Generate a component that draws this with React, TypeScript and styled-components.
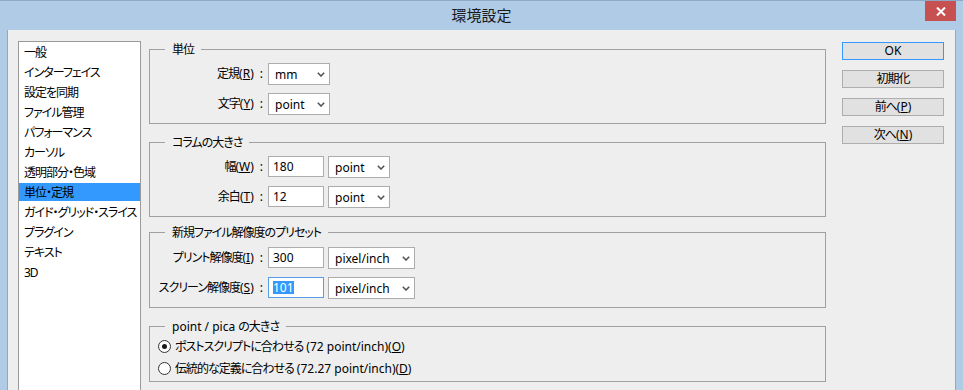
import React from 'react';
import styled, { createGlobalStyle } from 'styled-components';

const GlobalStyle = createGlobalStyle`
  html, body {
    margin: 0;
    padding: 0;
    background: #afcbe6;
  }
  body {
    font-family: 'Noto Sans', 'Noto Sans CJK JP', sans-serif;
    font-size: 12px;
    color: #000;
    font-feature-settings: 'palt';
  }
  * {
    box-sizing: border-box;
  }
`;

const NAV_ITEMS = [
  '一般',
  'インターフェイス',
  '設定を同期',
  'ファイル管理',
  'パフォーマンス',
  'カーソル',
  '透明部分・色域',
  '単位・定規',
  'ガイド・グリッド・スライス',
  'プラグイン',
  'テキスト',
  '3D',
];

const Chevron = () => (
  <svg width="8" height="5" viewBox="0 0 8 5">
    <path d="M0.8 0.8 L4 4 L7.2 0.8" fill="none" stroke="#555" strokeWidth="1.6" />
  </svg>
);

const SelectElem: React.FC<{ value: string; width: number }> = ({ value, width }) => (
  <Select $width={width}>
    <span>{value}</span>
    <Chevron />
  </Select>
);

const LabelElem: React.FC<{ text: string; mnemonic: string }> = ({ text, mnemonic }) => (
  <Label>
    <Jp>{text}</Jp>(<u>{mnemonic}</u>)<Colon>:</Colon>
  </Label>
);

export default function App() {
  return (
    <>
      <GlobalStyle />
      <Window>
        <TitleBar>
          <Title>環境設定</Title>
          <CloseButton>
            <svg width="10" height="9" viewBox="0 0 10 9">
              <path d="M1 0.5 L9 8.5 M9 0.5 L1 8.5" stroke="#fff" strokeWidth="2" />
            </svg>
          </CloseButton>
        </TitleBar>

        <Client>
          <NavList>
            {NAV_ITEMS.map((item) => (
              <NavItem key={item} $active={item === '単位・定規'}>
                {item}
              </NavItem>
            ))}
          </NavList>

          <Groups>
            <Group $top={0} $pad="5px 0 8px">
              <Legend>
                <Jp>単位</Jp>
              </Legend>
              <Rows>
                <Row>
                  <LabelElem text="定規" mnemonic="R" />
                  <SelectElem value="mm" width={62} />
                </Row>
                <Row>
                  <LabelElem text="文字" mnemonic="Y" />
                  <SelectElem value="point" width={62} />
                </Row>
              </Rows>
            </Group>

            <Group $top={10} $pad="5px 0 8px">
              <Legend>
                <Jp>コラムの大きさ</Jp>
              </Legend>
              <Rows>
                <Row>
                  <LabelElem text="幅" mnemonic="W" />
                  <Input>180</Input>
                  <SelectElem value="point" width={62} />
                </Row>
                <Row>
                  <LabelElem text="余白" mnemonic="T" />
                  <Input>12</Input>
                  <SelectElem value="point" width={62} />
                </Row>
              </Rows>
            </Group>

            <Group $top={7} $pad="6px 0 8px">
              <Legend>
                <Jp>新規ファイル解像度のプリセット</Jp>
              </Legend>
              <Rows>
                <Row>
                  <LabelElem text="プリント解像度" mnemonic="I" />
                  <Input>300</Input>
                  <SelectElem value="pixel/inch" width={87} />
                </Row>
                <Row>
                  <LabelElem text="スクリーン解像度" mnemonic="S" />
                  <Input $focused>
                    <Selection>101</Selection>
                  </Input>
                  <SelectElem value="pixel/inch" width={87} />
                </Row>
              </Rows>
            </Group>

            <Group $top={10} $pad="0 0 2px">
              <Legend>
                point / pica <Jp>の大きさ</Jp>
              </Legend>
              <RadioRow>
                <Radio $checked />
                <Jp>ポストスクリプトに合わせる</Jp>&nbsp;(72 point/inch)(<u>O</u>)
              </RadioRow>
              <RadioRow>
                <Radio />
                <Jp>伝統的な定義に合わせる</Jp>&nbsp;(72.27 point/inch)(<u>D</u>)
              </RadioRow>
            </Group>
          </Groups>

          <Buttons>
            <Button $primary>OK</Button>
            <Button>
              <Jp>初期化</Jp>
            </Button>
            <Button>
              <Jp>前へ</Jp>(<u>P</u>)
            </Button>
            <Button>
              <Jp>次へ</Jp>(<u>N</u>)
            </Button>
          </Buttons>
        </Client>
      </Window>
    </>
  );
}

const Window = styled.div`
  width: 963px;
  height: 390px;
  overflow: hidden;
  display: flex;
  flex-direction: column;
  background: #afcbe6;
  border-top: 1px solid #8ea8c8;
`;

const TitleBar = styled.div`
  height: 29px;
  flex: none;
  display: grid;
  grid-template-columns: 1fr auto 1fr;
  align-items: start;
  padding: 0 7px;
`;

const Title = styled.div`
  grid-column: 2;
  font-size: 15px;
  line-height: 29px;
  color: #1a1a1a;
`;

const CloseButton = styled.div`
  grid-column: 3;
  justify-self: end;
  width: 31px;
  height: 20px;
  background: #c75050;
  display: flex;
  align-items: center;
  justify-content: center;
`;

const Client = styled.div`
  flex: 1;
  margin: 0 7px;
  border-left: 1px solid #90a8c6;
  border-right: 1px solid #90a8c6;
  background: #eeeeee;
  display: flex;
  align-items: flex-start;
  padding: 11px 11px 0 10px;
`;

const Jp = styled.span`
  letter-spacing: -1px;
`;

const NavList = styled.div`
  width: 123px;
  height: 360px;
  flex: none;
  background: #fff;
  border: 1px solid #9a9a9a;
  padding-top: 1px;
  display: flex;
  flex-direction: column;
  gap: 2px;
`;

const NavItem = styled.div<{ $active?: boolean }>`
  height: 18px;
  line-height: 19px;
  padding-left: 5px;
  white-space: nowrap;
  overflow: hidden;
  letter-spacing: -1px;
  background: ${({ $active }) => ($active ? '#3399ff' : 'transparent')};
`;

const Groups = styled.div`
  width: 677px;
  flex: none;
  margin-left: 8px;
  display: flex;
  flex-direction: column;
`;

const Group = styled.fieldset<{ $top: number; $pad: string }>`
  margin: ${({ $top }) => $top}px 0 0;
  padding: ${({ $pad }) => $pad};
  min-width: 0;
  border: 1px solid #a0a0a0;
`;

const Legend = styled.legend`
  margin-left: 15px;
  padding: 0 7px;
  font-size: 12px;
  line-height: 17px;
`;

const Rows = styled.div`
  display: flex;
  flex-direction: column;
  gap: 8px;
`;

const Row = styled.div`
  display: flex;
  align-items: flex-start;
  gap: 4px;
  height: 22px;
`;

const Label = styled.div`
  width: 114px;
  flex: none;
  text-align: right;
  line-height: 22px;
  padding-right: 1px;
  white-space: nowrap;
`;

const Colon = styled.span`
  margin-left: 6px;
`;

const Select = styled.div<{ $width: number }>`
  width: ${({ $width }) => $width}px;
  height: 22px;
  flex: none;
  background: #fff;
  border: 1px solid #acacac;
  display: flex;
  align-items: center;
  justify-content: space-between;
  padding: 0 4px 0 6px;
  font-size: 12px;
`;

const Input = styled.div<{ $focused?: boolean }>`
  width: 56px;
  height: 21px;
  flex: none;
  background: #fff;
  border: 1px solid ${({ $focused }) => ($focused ? '#569de5' : '#acacac')};
  padding-left: 4px;
  line-height: 19px;
`;

const Selection = styled.span`
  display: inline-block;
  background: #3399ff;
  color: #fff;
  line-height: 13px;
`;

const RadioRow = styled.div`
  height: 22px;
  display: flex;
  align-items: center;
  padding-left: 8px;
  white-space: nowrap;
`;

const Radio = styled.span<{ $checked?: boolean }>`
  width: 13px;
  height: 13px;
  flex: none;
  margin-right: 4px;
  border: 1px solid #333;
  border-radius: 50%;
  background: #fff;
  display: flex;
  align-items: center;
  justify-content: center;

  &::after {
    content: '';
    width: 5px;
    height: 5px;
    border-radius: 50%;
    background: ${({ $checked }) => ($checked ? '#1a1a1a' : 'transparent')};
  }
`;

const Buttons = styled.div`
  width: 102px;
  flex: none;
  margin: 1px 0 0 16px;
  display: flex;
  flex-direction: column;
  gap: 10px;
`;

const Button = styled.div<{ $primary?: boolean }>`
  height: 18px;
  background: #e1e1e1;
  border: 1px solid ${({ $primary }) => ($primary ? '#3399ff' : '#adadad')};
  text-align: center;
  line-height: 16px;
  font-size: 12px;
`;
